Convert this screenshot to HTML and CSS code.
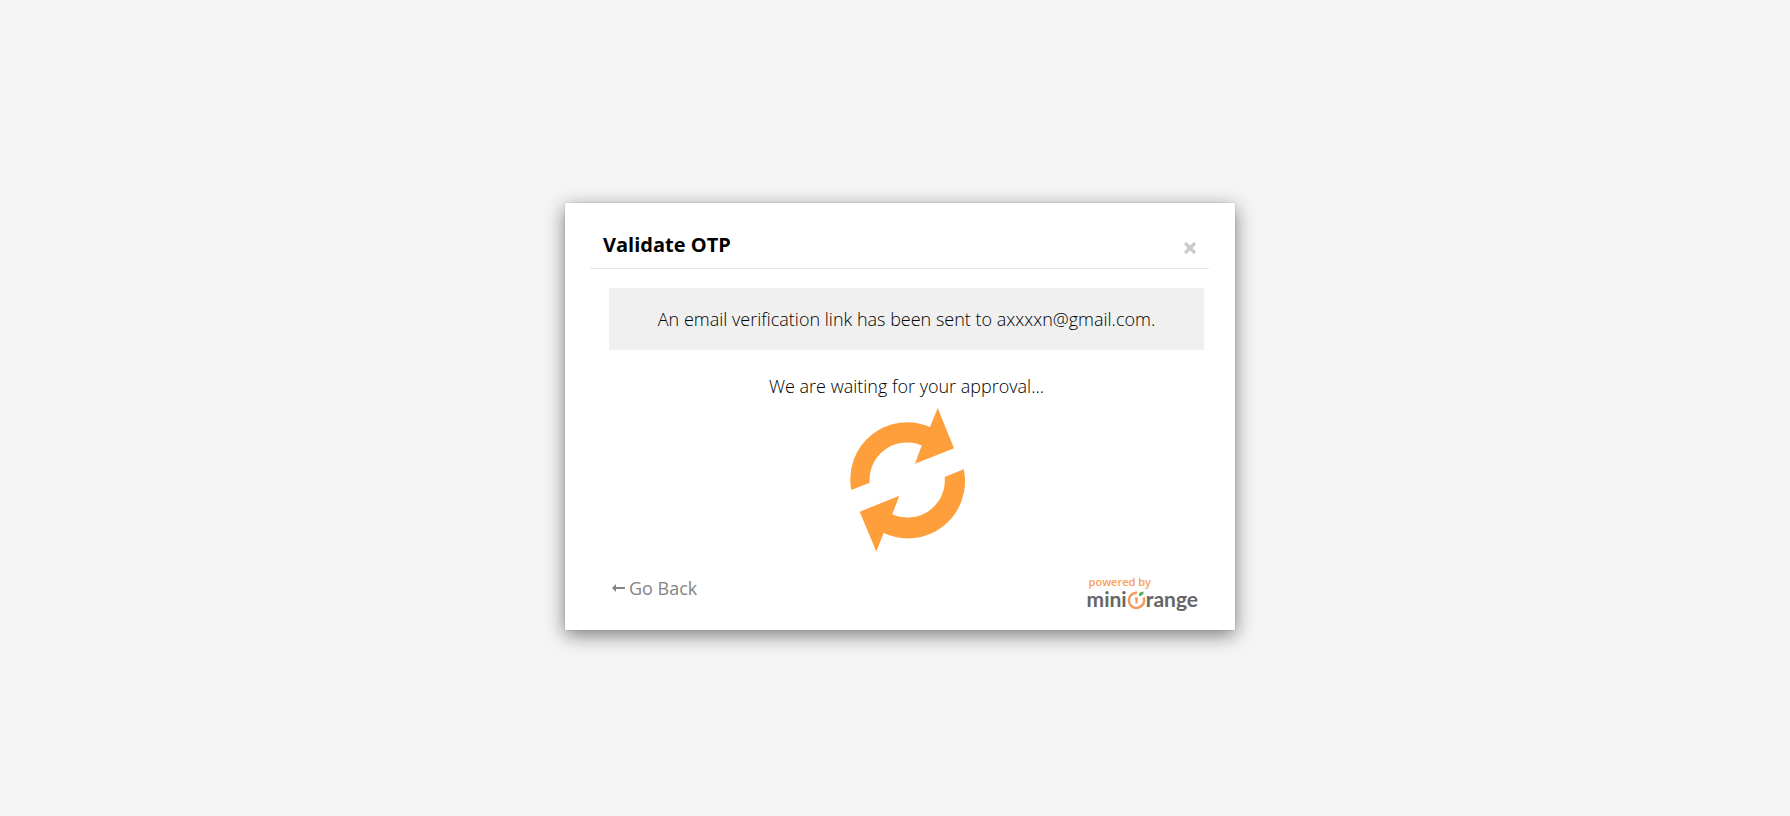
FILE: index.html
```html
<!DOCTYPE html>
<html lang="en">
<head>
<meta charset="utf-8">
<meta name="viewport" content="width=device-width, initial-scale=1">
<title>Validate OTP</title>
<link rel="stylesheet" href="styles.css">
</head>
<body>
<main class="page">
  <section class="modal" role="dialog" aria-labelledby="modal-title">
    <header class="modal-header">
      <h1 class="modal-title" id="modal-title">Validate OTP</h1>
      <button class="close" type="button" aria-label="Close">
        <svg width="12" height="12" viewBox="0 0 12 12" aria-hidden="true"><path d="M2 2 10 10M10 2 2 10" fill="none" stroke="#cbcbcb" stroke-width="3.2" stroke-linecap="round"/></svg>
      </button>
    </header>
    <div class="modal-body">
      <p class="notice">An email verification link has been sent to axxxxn@gmail.com.</p>
      <p class="waiting">We are waiting for your approval...</p>
      <svg class="spinner" width="116" height="144" viewBox="849 407 116 144" aria-hidden="true">
        <g fill="#ff9f3c">
          <path d="M851.300 489A57 57 0 0 1 930 426L937.700 407 954 447.300 915 462.700 921.700 444.500A37.300 37.300 0 0 0 869.700 481.700Z"/>
          <path d="M963.700 468.300A57 57 0 0 1 883.700 532L876.300 550.500 859.700 510.700 899.300 494.700 892.300 513.300A37.300 37.300 0 0 0 944.700 476Z"/>
        </g>
      </svg>
    </div>
    <footer class="modal-footer">
      <a class="back" href="#">
        <svg width="14" height="8" viewBox="0 0 14 8" aria-hidden="true"><path d="M0 4 4 0V3H13V5H4V8Z" fill="#858585"/></svg>
        <span>Go Back</span>
      </a>
      <div class="brand">
        <span class="powered">powered by</span>
        <span class="logo">
          <span>mini</span>
          <svg width="19" height="20" viewBox="0 0 19 20" aria-hidden="true">
            <path d="M10 3.800A7.600 7.600 0 1 0 16.500 8.500" fill="none" stroke="#f5985a" stroke-width="2.400"/>
            <path d="M9.500 8.500V14.500M8 9.500H11" fill="none" stroke="#f5985a" stroke-width="2"/>
            <path d="M12 7C11.500 4 13 3 16.500 2.500 17 5.500 15 7 12 7Z" fill="#56b458"/>
          </svg>
          <span>range</span>
        </span>
      </div>
    </footer>
  </section>
</main>
</body>
</html>
```
FILE: styles.css
```css
* {
  box-sizing: border-box;
}

body {
  margin: 0;
  background: #f5f5f5;
  color: #000;
  font-family: "Open Sans", "Noto Sans", sans-serif;
  font-size: 18px;
  line-height: 26px;
}

.page {
  display: flex;
  align-items: center;
  justify-content: center;
  min-height: 100vh;
  padding: 16px 0 0 10px;
}

.modal {
  width: 100%;
  max-width: 670px;
  padding: 25px 26px 20px 25px;
  background: #fff;
  box-shadow: 0 5px 18px rgba(0, 0, 0, 0.5), 0 0 1px rgba(0, 0, 0, 0.3);
}

.modal-header {
  display: flex;
  align-items: center;
  justify-content: space-between;
  padding: 4px 13px 10px;
  border-bottom: 1px solid #e5e5e5;
}

.modal-title {
  margin: 0;
  color: #000;
  font-size: 20px;
  font-weight: 700;
  line-height: 26px;
}

.close {
  display: flex;
  padding: 6px 0 0;
  border: 0;
  background: none;
  cursor: pointer;
}

.modal-body {
  display: flex;
  flex-direction: column;
  align-items: center;
  padding: 19px 5px 0 19px;
  font-weight: 300;
}

.notice {
  width: 100%;
  margin: 0 0 23px;
  padding: 18px;
  background: #f0f0f0;
  text-align: center;
}

.waiting {
  margin: 0;
}

.spinner {
  margin-top: 9px;
}

.modal-footer {
  display: flex;
  align-items: flex-start;
  justify-content: space-between;
  padding: 23px 11px 0 22px;
}

.back {
  display: flex;
  align-items: center;
  gap: 3px;
  color: #858585;
  text-decoration: none;
}

.brand {
  display: flex;
  flex-direction: column;
}

.powered {
  padding-left: 2px;
  color: #f7a05a;
  font-size: 11px;
  font-weight: 600;
  line-height: 14px;
}

.logo {
  display: flex;
  align-items: center;
  color: #666;
  font-family: Lato, sans-serif;
  font-size: 21px;
  font-weight: 700;
  line-height: 20px;
}

.logo svg {
  margin-bottom: 1px;
}
```
